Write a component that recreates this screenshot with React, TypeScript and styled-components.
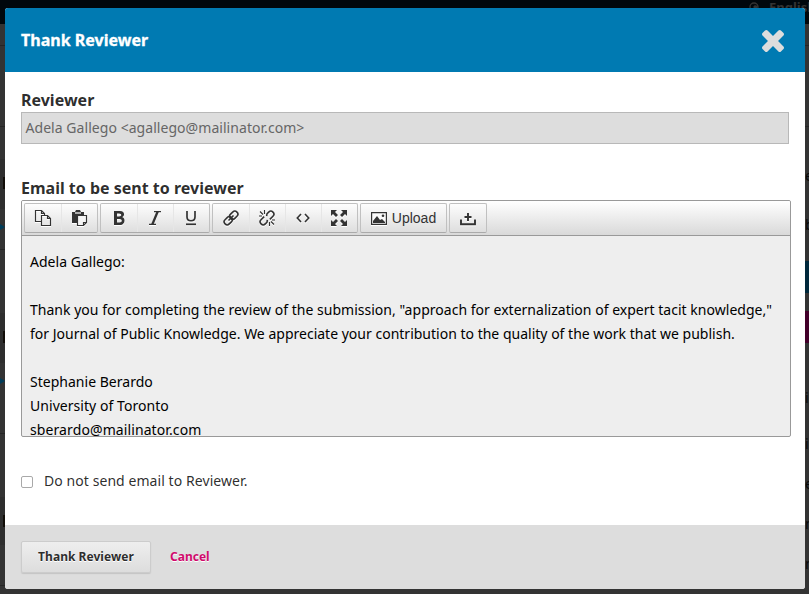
import React from "react";
import styled, { createGlobalStyle } from "styled-components";

const Global = createGlobalStyle`
  * { box-sizing: border-box; }
  html, body { margin: 0; overflow: hidden; }
  body { font-family: "Noto Sans", "Open Sans", sans-serif; font-size: 14px; color: rgba(0,0,0,.84); }
`;
const Page = styled.div`
  position: relative; width: 809px; height: 594px; overflow: hidden; padding: 8px 4px 5px 5px;
  background: linear-gradient(#00070c 24px, #333 24px);
`;
const Mark = styled.span<{ $x: number; $y: number; $w: number; $h: number; $c: string }>`
  position: absolute; left: ${p => p.$x}px; top: ${p => p.$y}px;
  width: ${p => p.$w}px; height: ${p => p.$h}px; background: ${p => p.$c};
`;
const Arrow = styled.span<{ $y: number }>`
  position: absolute; left: 0; top: ${p => p.$y}px;
  border: 3px solid transparent; border-left: 5px solid #003c59; border-right: 0;
`;
const Peek = styled.span<{ $y: number }>`
  position: absolute; left: 805px; top: ${p => p.$y}px; color: #080808; line-height: 16px; white-space: nowrap;
`;
const Language = styled.div`
  position: absolute; left: 749px; top: 0; display: flex; gap: 10px; align-items: flex-start;
  color: #333; font-size: 13px; font-weight: 700; line-height: 14px;
  svg { margin-top: 2px; }
`;
const Dialog = styled.section`
  position: relative; width: 800px; height: 581px; display: flex; flex-direction: column;
  background: #fff; border-radius: 3px; overflow: hidden;
`;
const Header = styled.header`
  height: 64px; flex: none; background: #007ab2; color: #fff; padding: 0 21px 0 16px;
  display: flex; align-items: center; justify-content: space-between;
`;
const Title = styled.h1`
  margin: 0; font-size: 16px; line-height: 24px; font-weight: 700; letter-spacing: .02px; -webkit-text-stroke: .3px #fff;
`;
const Close = styled.button`
  border: 0; padding: 0; background: none; width: 22px; height: 22px; margin-top: 2px;
  svg { display: block; }
`;
const Body = styled.div`padding: 16px 14px 0 16px; flex: 1;`;
const Label = styled.label`
  display: block; height: 24px; line-height: 24px; font-size: 16px; font-weight: 700; letter-spacing: 0;
`;
const Field = styled.div`
  width: 768px; height: 32px; border: 1px solid #b8b8b8; background: #ddd; color: #666; padding-left: 3.5px;
  line-height: 30px; margin-bottom: 32px; letter-spacing: .05px;
`;
const Editor = styled.div`
  width: 770px; height: 237px; border: 1px solid #999; border-radius: 2px; background: #eee; overflow: hidden;
`;
const Toolbar = styled.div`
  height: 35px; padding: 2px; display: flex; gap: 2px; border-bottom: 1px solid #999;
  background: linear-gradient(#fff, #d9d9d9);
`;
const Group = styled.div`
  height: 30px; display: flex; border: 1px solid #c0c0c0; border-bottom-color: #aaa; border-radius: 2px; overflow: hidden;
  background: linear-gradient(#fdfdfd, #dedede);
`;
const Tool = styled.button<{ $w?: number }>`
  width: ${p => p.$w || 36}px; padding: 0; border: 0; background: none; color: #333;
  display: flex; align-items: center; justify-content: center; gap: 5px;
  font: 14px "Liberation Sans", Arial, sans-serif;
  & + & { box-shadow: inset 1px 0 #e6e6e6; }
  svg { display: block; flex: none; filter: drop-shadow(0 1px 0 #fff); }
`;
const Message = styled.div`
  height: 200px; overflow: hidden; padding: 14px 0 0 8px; color: #000; line-height: 24px; white-space: pre;
`;
const Line = styled.div<{ $s?: number }>`height: 24px; letter-spacing: ${p => p.$s ?? 0.02}px;`;
const Check = styled.label`
  display: flex; align-items: center; gap: 11px; height: 24px; margin-top: 31px; letter-spacing: .07px;
`;
const Box = styled.input`
  appearance: none; width: 12px; height: 12px; margin: 3px 0 0; border: 1px solid #a9a9a9; border-radius: 2px; background: #fff;
`;
const Footer = styled.footer`
  height: 64px; flex: none; padding: 16px; background: #ddd; display: flex; align-items: flex-start; gap: 19px;
`;
const Submit = styled.button`
  width: 130px; height: 32px; padding: 0; border: 1px solid #ccc; border-radius: 2px; color: rgba(0,0,0,.84);
  background: linear-gradient(#eee, #ddd); box-shadow: 0 1px 1px #c4c4c4;
  font: 700 12px/30px "Noto Sans", sans-serif; text-shadow: 0 1px #fff; letter-spacing: .04px;
`;
const Cancel = styled.a`color: #d00a6c; font-size: 12px; line-height: 32px; font-weight: 700; text-shadow: 0 1px #fff;`;

const Svg = ({ children, s = 16 }: { children: React.ReactNode; s?: number }) => (
  <svg width={s} height={s} viewBox={`0 0 ${s} ${s}`} fill="none" stroke="#333" strokeWidth="1.3">{children}</svg>
);

const CopyIcon = () => <Svg s={18}><path d="M7 12.5H1.5v-11h6l3 3v1.5M7.5 1.5v3h3M7.5 6.5h6l3 3v7h-9zM13.5 6.5v3h3" strokeWidth="1.15" /></Svg>;
const PasteIcon = () => <Svg s={18}><path d="M2 3h3l1-2h4l1 2h3v3H8v8H2z" fill="#333" stroke="none" /><path d="M5 4h6" stroke="#eee" /><path d="M7.5 6.5h9v7l-3 3h-6zM13.5 16.5v-3h3" fill="#f4f4f4" strokeWidth="1.15" /></Svg>;
const BoldIcon = () => <Svg><path d="M3 1h6c5 0 5 5 2 6 4 1 3 8-2 8H3zM6 3.5v3h2c3 0 3-3 0-3zM6 9v3.5h2.5c3 0 3-3.5 0-3.5z" fill="#333" fillRule="evenodd" stroke="none" /></Svg>;
const ItalicIcon = () => <Svg><path d="M7 1.7h7M2 14.3h7" /><path d="M10.7 1.5l-5.4 13" strokeWidth="2.3" /></Svg>;
const UnderlineIcon = () => <Svg><path d="M4 1v6c0 5 8 5 8 0V1" strokeWidth="1.7" /><path d="M3 14.3h10" strokeWidth="1.7" /></Svg>;
const LinkIcon = () => <Svg s={18}><g transform="rotate(-45 9 9)" strokeWidth="1.6"><rect x="0.6" y="6" width="9" height="6" rx="3" /><rect x="8.4" y="6" width="9" height="6" rx="3" /><path d="M5.5 9h7" /></g></Svg>;
const UnlinkIcon = () => <Svg s={18}><g transform="rotate(-45 9 9)" strokeWidth="1.6"><path d="M8 6H3.6a3 3 0 0 0 0 6H6l2-1.5M10 12h4.4a3 3 0 0 0 0-6H12l-2 1.5" /></g><path d="M6.5 1v4M2 2.5l3 3M1 7h3M11.5 13v4M13 12.5l3 3M14 11h3" strokeWidth="1.1" /></Svg>;
const CodeIcon = () => <Svg><path d="M6 4L2.3 8 6 12M10 4l3.7 4-3.7 4" strokeWidth="1.6" /></Svg>;
const FullscreenIcon = () => <Svg s={18}><path d="M1 1h6L5 3l3 3-2 2-3-3-2 2zM17 1v6l-2-2-3 3-2-2 3-3-2-2zM1 17v-6l2 2 3-3 2 2-3 3 2 2zM17 17h-6l2-2-3-3 2-2 3 3 2-2z" fill="#333" stroke="none" /></Svg>;
const ImageIcon = () => <svg width="16" height="13" viewBox="0 0 16 13"><path d="M.6.6h14.8v11.8H.6z" fill="#fafafa" stroke="#333" strokeWidth="1.2" /><path d="M2 11V9l4-5 3 4 2-1 3 3v1z" fill="#333" /><circle cx="12" cy="3.8" r="1.3" fill="#333" /></svg>;
const UploadIcon = () => <Svg><path d="M1 9.5v4.7h14V9.5M8 3v8M4.5 7h7" strokeWidth="1.9" /></Svg>;
const CloseIcon = () => <svg width="22" height="22" viewBox="302 366 1188 1188"><path fill="#ddd" d="M1490 1322q0 40-28 68l-136 136q-28 28-68 28t-68-28l-294-294-294 294q-28 28-68 28t-68-28l-136-136q-28-28-28-68t28-68l294-294-294-294q-28-28-28-68t28-68l136-136q28-28 68-28t68 28l294 294 294-294q28-28 68-28t68 28l136 136q28 28 28 68t-28 68l-294 294 294 294q28 28 28 68z" /></svg>;

export default function App() {
  return (
    <><Global /><Page>
      <Mark $x={0} $y={45} $w={809} $h={1} $c="#252525" />
      <Mark $x={0} $y={126} $w={809} $h={1} $c="#252525" />
      <Mark $x={0} $y={159} $w={5} $h={50} $c="#2e2e2e" />
      <Mark $x={3} $y={177} $w={2} $h={12} $c="#110d08" />
      <Mark $x={0} $y={249} $w={5} $h={1} $c="#252525" />
      <Mark $x={0} $y={313} $w={5} $h={50} $c="#2e2e2e" />
      <Mark $x={3} $y={331} $w={2} $h={12} $c="#110d08" />
      <Mark $x={0} $y={433} $w={5} $h={1} $c="#252525" />
      <Mark $x={0} $y={497} $w={5} $h={48} $c="#2e2e2e" />
      <Mark $x={3} $y={515} $w={2} $h={12} $c="#110d08" />
      <Mark $x={0} $y={585} $w={5} $h={1} $c="#252525" />
      <Arrow $y={224} /><Arrow $y={378} />
      <Mark $x={805} $y={261} $w={4} $h={32} $c="#00283b" />
      <Mark $x={805} $y={311} $w={4} $h={32} $c="#43002a" />
      <Peek $y={168}>e</Peek><Peek $y={217}>b</Peek><Peek $y={390}>i</Peek>
      <Peek $y={436}>i</Peek><Peek $y={476}>e</Peek><Peek $y={516}>n</Peek><Peek $y={556}>n</Peek>
      <Language>
        <svg width="10" height="10" viewBox="0 0 10 10"><circle cx="5" cy="5" r="4" fill="none" stroke="#333" strokeWidth="1.4" /><path d="M2 2l4 1-2 2 3 3 2-4" fill="#333" /></svg>
        English
      </Language>
      <Dialog>
        <Header>
          <Title>Thank Reviewer</Title>
          <Close aria-label="Close"><CloseIcon /></Close>
        </Header>
        <Body>
          <Label>Reviewer</Label>
          <Field>Adela Gallego &lt;agallego@mailinator.com&gt;</Field>
          <Label>Email to be sent to reviewer</Label>
          <Editor>
            <Toolbar>
              <Group><Tool aria-label="Copy"><CopyIcon /></Tool><Tool aria-label="Paste"><PasteIcon /></Tool></Group>
              <Group><Tool aria-label="Bold"><BoldIcon /></Tool><Tool aria-label="Italic"><ItalicIcon /></Tool><Tool aria-label="Underline"><UnderlineIcon /></Tool></Group>
              <Group><Tool aria-label="Link"><LinkIcon /></Tool><Tool aria-label="Unlink"><UnlinkIcon /></Tool><Tool aria-label="Source"><CodeIcon /></Tool><Tool aria-label="Fullscreen"><FullscreenIcon /></Tool></Group>
              <Group><Tool $w={85}><ImageIcon />Upload</Tool></Group>
              <Group><Tool aria-label="Insert"><UploadIcon /></Tool></Group>
            </Toolbar>
            <Message>
              <Line>Adela Gallego:</Line>
              <Line />
              <Line>Thank you for completing the review of the submission, "approach for externalization of expert tacit knowledge,"</Line>
              <Line $s={0.005}>for Journal of Public Knowledge. We appreciate your contribution to the quality of the work that we publish.</Line>
              <Line />
              <Line>Stephanie Berardo</Line>
              <Line $s={0.05}>University of Toronto</Line>
              <Line $s={0.1}>sberardo@mailinator.com</Line>
            </Message>
          </Editor>
          <Check><Box type="checkbox" />Do not send email to Reviewer.</Check>
        </Body>
        <Footer><Submit>Thank Reviewer</Submit><Cancel>Cancel</Cancel></Footer>
      </Dialog>
    </Page></>
  );
}
